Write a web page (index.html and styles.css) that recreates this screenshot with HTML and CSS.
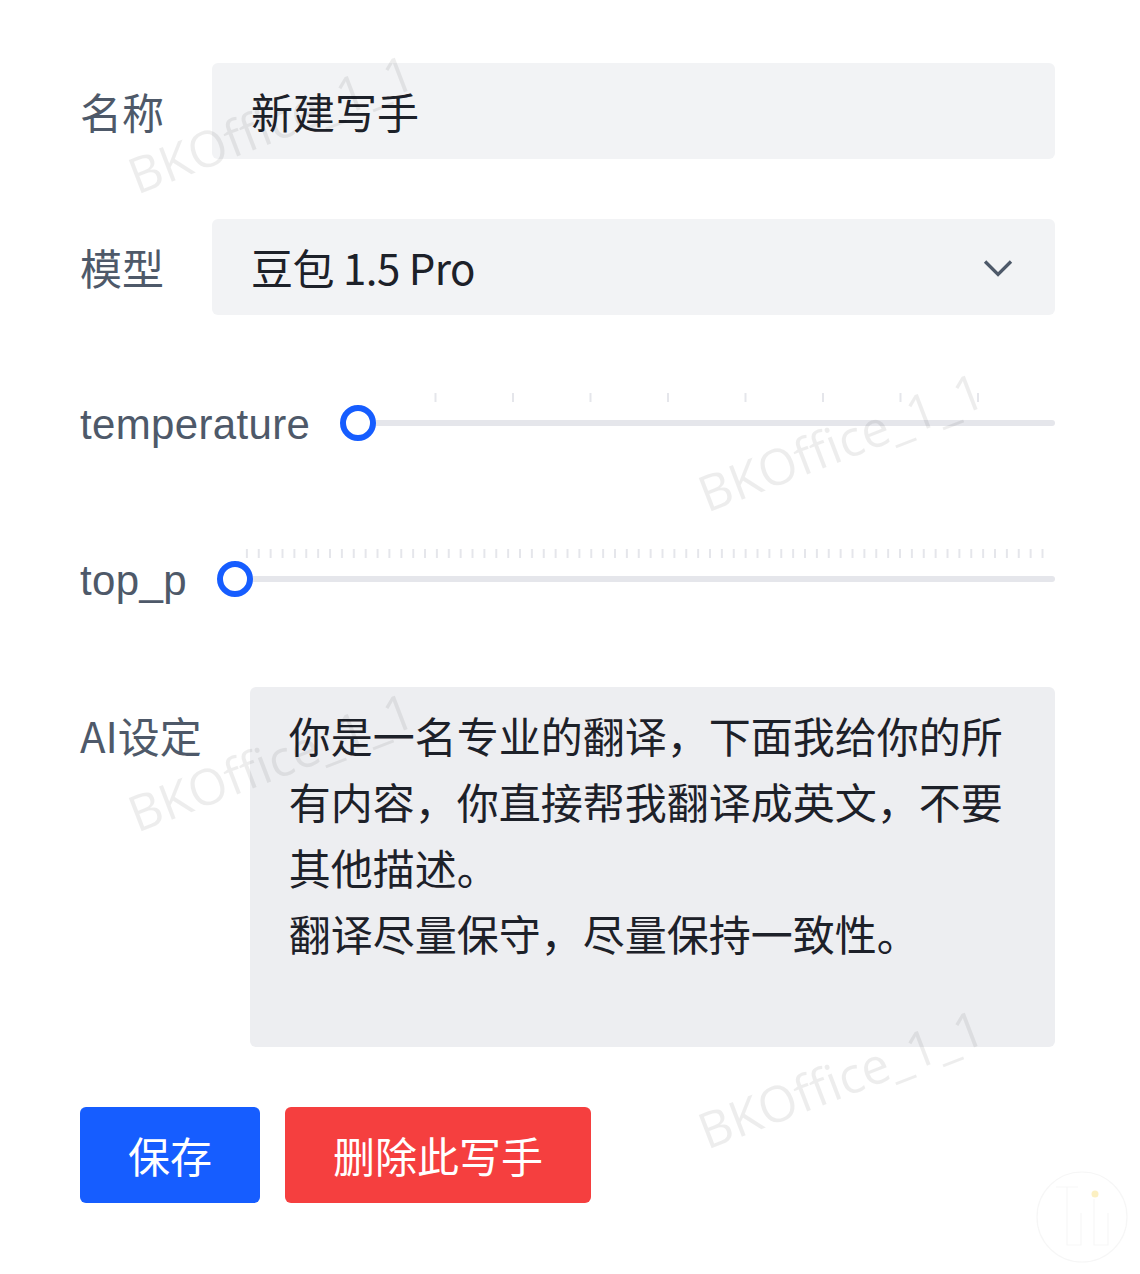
FILE: index.html
```html
<!DOCTYPE html>
<html lang="zh-CN">
<head>
<meta charset="utf-8">
<title>写手设置</title>
<link rel="stylesheet" href="styles.css">
</head>
<body>
<div class="page">
  <form class="form">
    <div class="row">
      <label class="label">名称</label>
      <div class="input">新建写手</div>
    </div>
    <div class="row">
      <label class="label">模型</label>
      <div class="input select">
        <span class="select-value">豆包 1.5 Pro</span>
        <svg class="chevron" viewBox="0 0 48 48" width="40" height="40"><path d="M39.6 17.443L24.043 33 8.487 17.443" fill="none" stroke="#4e5969" stroke-width="4" stroke-linecap="butt"/></svg>
      </div>
    </div>
    <div class="row">
      <label class="label label-latin">temperature</label>
      <div class="slider">
        <div class="ticks ticks-temp"></div>
        <div class="track"></div>
        <div class="thumb"></div>
      </div>
    </div>
    <div class="row">
      <label class="label label-latin">top_p</label>
      <div class="slider">
        <div class="ticks ticks-topp"></div>
        <div class="track"></div>
        <div class="thumb"></div>
      </div>
    </div>
    <div class="row row-top">
      <label class="label">AI设定</label>
      <div class="textarea">你是一名专业的翻译，下面我给你的所有内容，你直接帮我翻译成英文，不要其他描述。
翻译尽量保守，尽量保持一致性。</div>
    </div>
    <div class="actions">
      <button type="button" class="btn btn-primary">保存</button>
      <button type="button" class="btn btn-danger">删除此写手</button>
    </div>
  </form>

  <div class="watermarks">
    <span class="wm wm1">BKOffice_1_1</span>
    <span class="wm wm2">BKOffice_1_1</span>
    <span class="wm wm3">BKOffice_1_1</span>
    <span class="wm wm4">BKOffice_1_1</span>
  </div>

  <svg class="corner-logo" viewBox="0 0 96 96" width="96" height="96">
    <circle cx="48" cy="48" r="45" fill="none" stroke="#f6f6f6" stroke-width="1.2"/>
    <path d="M22 18h22M33 18v58h14V44M60 30v46h14V44" fill="none" stroke="#f7f7f7" stroke-width="1.2"/>
    <circle cx="61" cy="25" r="3.5" fill="#fcf0c2"/>
  </svg>
</div>
</body>
</html>
```
FILE: styles.css
```css
* {
  box-sizing: border-box;
}

html, body {
  margin: 0;
  padding: 0;
  background: #ffffff;
}

body {
  font-family: "Noto Sans CJK SC", "Noto Sans", sans-serif;
  color: #1d2129;
}

.page {
  position: relative;
  width: 1140px;
  min-height: 1274px;
  overflow: hidden;
}

.form {
  display: flex;
  flex-direction: column;
  gap: 60px;
  padding: 63px 85px 0 80px;
}

.row {
  display: flex;
  align-items: center;
  gap: 48px;
  min-height: 96px;
}

.row-top {
  align-items: flex-start;
}

.label {
  flex: none;
  font-size: 42px;
  line-height: 96px;
  color: #4e5969;
  white-space: nowrap;
}

.label-latin {
  font-family: "Liberation Sans", sans-serif;
  line-height: 92px;
  padding-top: 4px;
  letter-spacing: 0.35px;
}

.input {
  flex: 1;
  height: 96px;
  background: #f2f3f5;
  border-radius: 6px;
  padding: 0 39px;
  font-size: 42px;
  line-height: 96px;
  color: #1d2129;
}

.select {
  display: flex;
  align-items: center;
  justify-content: space-between;
  padding-right: 37px;
}

.select-value {
  letter-spacing: -0.5px;
}

.chevron {
  flex: none;
  display: block;
}

.slider {
  flex: 1;
  position: relative;
  height: 96px;
  display: flex;
  align-items: center;
}

.track {
  width: 100%;
  height: 6px;
  border-radius: 3px;
  background: #e5e6eb;
}

.thumb {
  position: absolute;
  left: -18px;
  top: 30px;
  width: 36px;
  height: 36px;
  border-radius: 50%;
  border: 6px solid #165dff;
  background: #ffffff;
}

.ticks {
  position: absolute;
  top: 18px;
  left: 1px;
  height: 9px;
  background-image: linear-gradient(to left, #e5e6eb 2px, transparent 2px);
  background-repeat: repeat-x;
}

.ticks-temp {
  width: calc(100% * 8 / 9);
  background-size: calc(100% / 8) 100%;
}

.ticks-topp {
  width: calc(100% * 68 / 69);
  background-size: calc(100% / 68) 100%;
}

.textarea {
  flex: 1;
  height: 360px;
  background: #edeef1;
  border-radius: 6px;
  padding: 15px 39px;
  font-size: 42px;
  line-height: 66px;
  color: #1d2129;
  white-space: pre-wrap;
}

.actions {
  display: flex;
  gap: 25px;
}

.btn {
  height: 96px;
  padding: 0 48px;
  border: none;
  border-radius: 6px;
  font-family: "Noto Sans CJK SC", sans-serif;
  font-size: 42px;
  line-height: 96px;
  color: #ffffff;
}

.btn-primary {
  background: #165dff;
}

.btn-danger {
  background: #f53f3f;
}

.watermarks {
  position: absolute;
  inset: 0;
  pointer-events: none;
}

.wm {
  position: absolute;
  font-family: "Open Sans", sans-serif;
  font-size: 50px;
  line-height: 50px;
  color: rgba(0, 0, 0, 0.07);
  white-space: nowrap;
  transform-origin: 0 44px;
  transform: rotate(-21deg);
}

.wm1 { left: 137px; top: 151px; }
.wm2 { left: 707px; top: 469px; }
.wm3 { left: 137px; top: 789px; }
.wm4 { left: 707px; top: 1106px; }

.corner-logo {
  position: absolute;
  left: 1034px;
  top: 1169px;
  pointer-events: none;
}
```
